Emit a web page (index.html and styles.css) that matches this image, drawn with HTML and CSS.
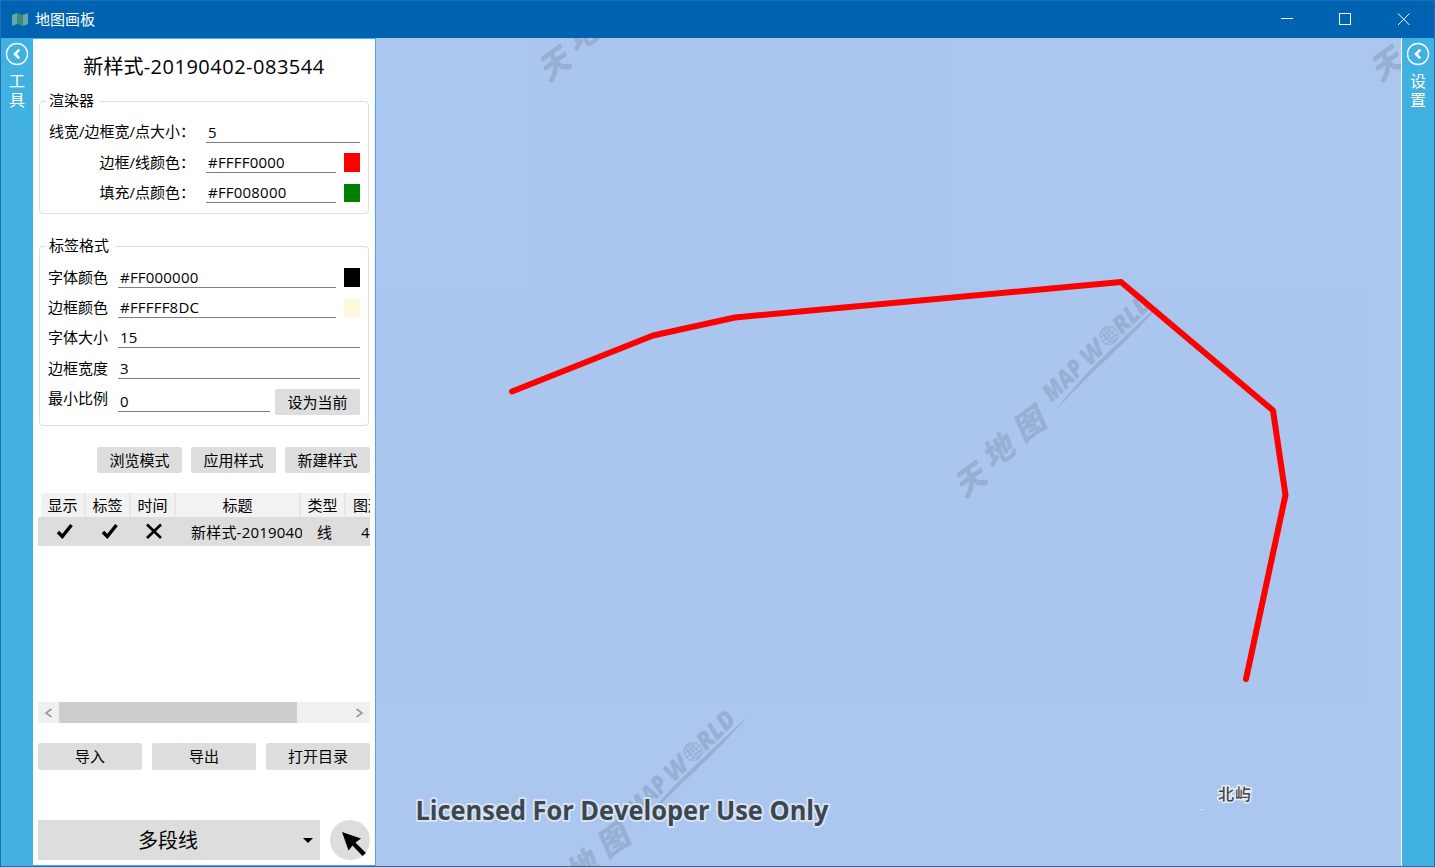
FILE: index.html
```html
<!DOCTYPE html>
<html lang="zh-CN">
<head>
<meta charset="utf-8">
<title>地图画板</title>
<link rel="stylesheet" href="styles.css">
</head>
<body>
<div class="window">
  <header class="titlebar">
    <svg class="app-icon" width="16" height="13" viewBox="0 0 16 13"><path d="M0 2 5 0v11L0 13z" fill="#63a8a4"/><path d="M5 0 11 2v11L5 11z" fill="#438a7c"/><path d="M11 2 16 0v11l-5 2z" fill="#63a8a4"/></svg>
    <span class="app-name">地图画板</span>
    <div class="win-controls">
      <svg width="58" height="36" viewBox="0 0 58 36"><path d="M23 17.500H35"/></svg>
      <svg width="58" height="36" viewBox="0 0 58 36"><rect x="23.500" y="12.500" width="11" height="11"/></svg>
      <svg width="58" height="36" viewBox="0 0 58 36"><path d="M24 12.500 35.500 24M35.500 12.500 24 24"/></svg>
    </div>
  </header>
  <main class="body">
    <aside class="rail">
      <svg width="24" height="24" viewBox="0 0 24 24"><circle cx="12" cy="12" r="10.500" fill="none" stroke="#fff" stroke-width="1.300"/><path d="M14.300 7.700 10 12l4.300 4.300" fill="none" stroke="#fff" stroke-width="2.600"/></svg>
      <span>工</span><span>具</span>
    </aside>
    <section class="panel">
      <h1 class="style-title">新样式<span>-20190402-083544</span></h1>
      <fieldset class="group renderer">
        <legend>渲染器</legend>
        <div class="row"><label>线宽/边框宽/点大小：</label><span class="input">5</span></div>
        <div class="row"><label>边框/线颜色：</label><span class="input">#FFFF0000</span><i class="swatch red"></i></div>
        <div class="row"><label>填充/点颜色：</label><span class="input">#FF008000</span><i class="swatch green"></i></div>
      </fieldset>
      <fieldset class="group labels">
        <legend>标签格式</legend>
        <div class="row"><label>字体颜色</label><span class="input">#FF000000</span><i class="swatch black"></i></div>
        <div class="row"><label>边框颜色</label><span class="input">#FFFFF8DC</span><i class="swatch cream"></i></div>
        <div class="row"><label>字体大小</label><span class="input">15</span></div>
        <div class="row taller"><label>边框宽度</label><span class="input">3</span></div>
        <div class="row scale"><label>最小比例</label><span class="input">0</span><button class="btn">设为当前</button></div>
      </fieldset>
      <div class="actions"><button class="btn">浏览模式</button><button class="btn">应用样式</button><button class="btn">新建样式</button></div>
      <div class="grid">
        <div class="thead"><span>显示</span><span>标签</span><span>时间</span><span>标题</span><span>类型</span><span class="last">图形</span></div>
        <div class="trow">
          <span><svg width="18" height="16" viewBox="0 0 18 16"><path class="mark" d="M2 9l4.300 4.500L15.500 2" stroke-width="3.400"/></svg></span>
          <span><svg width="18" height="16" viewBox="0 0 18 16"><path class="mark" d="M2 9l4.300 4.500L15.500 2" stroke-width="3.400"/></svg></span>
          <span><svg width="18" height="16" viewBox="0 0 18 16"><path class="mark" d="M1 1.500l14 13.500M15 1.500 1 15" stroke-width="2.600"/></svg></span>
          <span class="name">新样式-20190402-083544</span><span>线</span><span class="last">4</span>
        </div>
      </div>
      <div class="scrollbar">
        <svg width="21" height="21" viewBox="0 0 21 21"><path d="M13.500 7 8 11l5.500 4"/></svg>
        <i class="thumb"></i>
        <svg class="right" width="21" height="21" viewBox="0 0 21 21"><path d="M7.500 7 13 11l-5.500 4"/></svg>
      </div>
      <div class="files"><button class="btn">导入</button><button class="btn">导出</button><button class="btn">打开目录</button></div>
      <div class="draw">
        <div class="select"><span>多段线</span><svg width="10" height="5" viewBox="0 0 10 5"><path d="M0 0h10L5 5z"/></svg></div>
        <div class="pointer"><svg width="40" height="40" viewBox="0 0 40 40"><path d="M12 12 31 18.500 25.500 22.500 36 33 32.500 36 22.500 25.500 18.500 30.500z"/></svg></div>
      </div>
    </section>
    <section class="map">
      <svg width="1025" height="828" viewBox="376 38 1025 828">
        <defs>
          <g id="watermark">
            <g class="brush">
              <text transform="translate(972 479) rotate(-36) skewX(-12)" y="11">天</text>
              <text transform="translate(1000 450) rotate(-36) skewX(-12)" y="11">地</text>
              <text transform="translate(1031 423) rotate(-36) skewX(-12)" y="11">图</text>
            </g>
            <g transform="translate(1052 403) rotate(-44)">
              <g class="latin">
                <text x="0" y="0" textLength="47" lengthAdjust="spacingAndGlyphs">MAP</text>
                <text x="52" y="0" textLength="24" lengthAdjust="spacingAndGlyphs">W</text>
                <text x="97" y="0" textLength="44" lengthAdjust="spacingAndGlyphs">RLD</text>
              </g>
              <g fill="none" stroke="#98afd4" stroke-width="1.300">
                <circle cx="88" cy="-9" r="9"/><ellipse cx="88" cy="-9" rx="4" ry="9"/>
                <path d="M79-9h18M88-18V0M81-14q7 3 14 0M81-4q7-3 14 0"/>
              </g>
              <path d="M-4 8Q30 2 75 2.500T153 4Q110 7 75 6.500T-4 8z" fill="#98afd4"/>
            </g>
          </g>
        </defs>
        <rect class="sea" x="376" y="38" width="1025" height="828"/>
        <path d="M532 38H948V702H532zM376 288H1363V702H376z" fill="#a9c6ee" opacity=".35"/>
        <path d="M990.500 297V398M990.500 702V785" stroke="#aec8f0"/>
        <use href="#watermark"/>
        <use href="#watermark" x="-416" y="416"/>
        <use href="#watermark" x="-416" y="-416"/>
        <use href="#watermark" x="416" y="-416"/>
        <text class="place" x="1218" y="800" textLength="33">北屿</text>
        <path d="M1200 809.500h3" stroke="#d8e4f8"/>
        <polyline points="512,391.500 653,335.500 735,317.500 1121,282 1273,410.500 1285.500,495 1246,679" fill="none" stroke="#f00" stroke-width="6" stroke-linecap="round" stroke-linejoin="round"/>
        <text class="license" x="415.500" y="819.500" textLength="413" lengthAdjust="spacingAndGlyphs">Licensed For Developer Use Only</text>
      </svg>
    </section>
    <aside class="rail">
      <svg width="24" height="24" viewBox="0 0 24 24"><circle cx="12" cy="12" r="10.500" fill="none" stroke="#fff" stroke-width="1.300"/><path d="M14.300 7.700 10 12l4.300 4.300" fill="none" stroke="#fff" stroke-width="2.600"/></svg>
      <span>设</span><span>置</span>
    </aside>
  </main>
</div>
</body>
</html>
```
FILE: styles.css
```css
* { box-sizing: border-box; }
body { margin: 0; font: 15px/20px "Open Sans", "Noto Sans CJK SC", sans-serif; color: #000; overflow: hidden; }
.window { width: 1435px; height: 867px; display: flex; flex-direction: column; border: 1px solid #1a70ba; }
.titlebar { height: 37px; background: #0063b1; display: flex; align-items: center; color: #fff; padding-left: 11px; }
.app-name { margin-left: 7px; padding-bottom: 2px; }
.win-controls { display: flex; margin-left: auto; padding: 0 2px 2px 0; }
.win-controls svg { fill: none; stroke: #fff; stroke-width: 1; }
.body { flex: 1; display: flex; min-height: 0; }
.rail { width: 32px; background: #41b1e1; color: #fff; display: flex; flex-direction: column; align-items: center; padding-top: 4px; font-size: 16px; line-height: 19px; }
.rail svg { margin-bottom: 6px; }
.panel { width: 343px; background: #fff; border: 1px solid #41b1e1; border-left: 0; padding: 0 5px; display: flex; flex-direction: column; }
.style-title { margin: 14px 0 0; font-size: 20px; line-height: 28px; font-weight: 400; text-align: center; letter-spacing: 0.1px; }
.style-title span { letter-spacing: 0.5px; }
.group { margin: 0 1px; min-width: 0; border: 1px solid #d5dfe5; border-radius: 4px; padding: 0 8px; display: block; }
.group legend { padding: 0 6px 2px 3px; margin-left: -2px; height: 20px; line-height: 18px; }
.renderer { margin-top: 10px; height: 123px; }
.labels { margin-top: 22px; height: 190px; }
.row { display: flex; height: 30px; align-items: flex-end; }
.row label { height: 21px; white-space: nowrap; }
.renderer .row label { width: 147px; margin-right: 11px; text-align: right; }
.renderer .row:nth-of-type(1) { height: 32px; }
.renderer .row:nth-of-type(1) label { height: 22px; }
.labels .row label { width: 60px; margin-right: 10px; }
.labels .row:nth-of-type(1) { height: 32px; }
.labels .row.taller { height: 31px; }
.labels .row.scale { height: 33px; }
.labels .row.scale label { height: 24px; }
.input { flex: 1; height: 21px; padding-left: 2px; border-bottom: 1px solid #808080; letter-spacing: 0.2px; }
.swatch { width: 16px; height: 18px; margin: 0 0 1px 8px; }
.red, .black { height: 19px; }
.red { background: #f00; }
.green { background: #008000; }
.black { background: #000; }
.cream { background: #fff8dc; }
.btn { border: 0; border-radius: 2px; background: #ddd; font: inherit; color: #000; width: 85px; height: 26px; padding: 0; }
.row .btn { margin: 0 0 -3px 5px; }
.actions { display: flex; justify-content: flex-end; gap: 9px; margin-top: 21px; }
.grid { height: 209px; margin-top: 20px; overflow: hidden; }
.thead, .trow { display: grid; grid-template-columns: 45px 45px 45px 125px 45px 60px; white-space: nowrap; width: 365px; text-align: center; }
.thead { margin-left: 3px; height: 24px; line-height: 24px; background: #f2f2f2; }
.thead span { border-right: 2px solid #e7e7e7; }
.thead .last { text-align: left; padding-left: 7px; }
.trow { height: 29px; line-height: 31px; background: #ddd; padding-left: 4px; }
.trow svg { display: inline-block; vertical-align: middle; margin: -6px 0 0 1px; }
.trow .name { text-align: left; margin-left: 14px; width: 111px; overflow: hidden; letter-spacing: 0.2px; }
.trow .last { text-align: left; padding-left: 14px; }
.mark { fill: none; stroke: #000; }
.scrollbar { display: flex; height: 21px; background: #f0f0f0; }
.scrollbar svg { fill: none; stroke: #999; stroke-width: 1.6; }
.thumb { width: 238px; background: #cdcdcd; }
.scrollbar .right { margin-left: auto; }
.files { display: flex; gap: 10px; margin-top: 20px; }
.files .btn { flex: 1; height: 27px; padding-bottom: 2px; }
.draw { display: flex; gap: 10px; margin-top: 50px; height: 40px; }
.select { flex: 1; background: #ddd; display: flex; align-items: center; font-size: 20px; padding-right: 7px; }
.select span { flex: 1; text-align: center; padding: 2px 5px 0 0; }
.pointer { width: 40px; height: 40px; border-radius: 50%; background: #ddd; }
.map { width: 1025px; background: #abc6ef; }
.map svg { display: block; }
.map + .rail { width: 33px; border-left: 1px solid #fff; }
.sea { fill: #abc6ef; }
.brush { font: 900 31px "Noto Sans CJK SC", sans-serif; fill: #98afd4; text-anchor: middle; }
.latin { font: italic 800 25px "Open Sans", sans-serif; fill: #98afd4; }
.place { font: 500 16px "Noto Sans CJK SC", sans-serif; fill: #444; stroke: #e8ecf3; stroke-width: 3px; paint-order: stroke; }
.license { font: 700 26px "Open Sans", sans-serif; fill: #3b4653; stroke: #d9e2ef; stroke-width: 4px; stroke-linejoin: round; paint-order: stroke; }
```
